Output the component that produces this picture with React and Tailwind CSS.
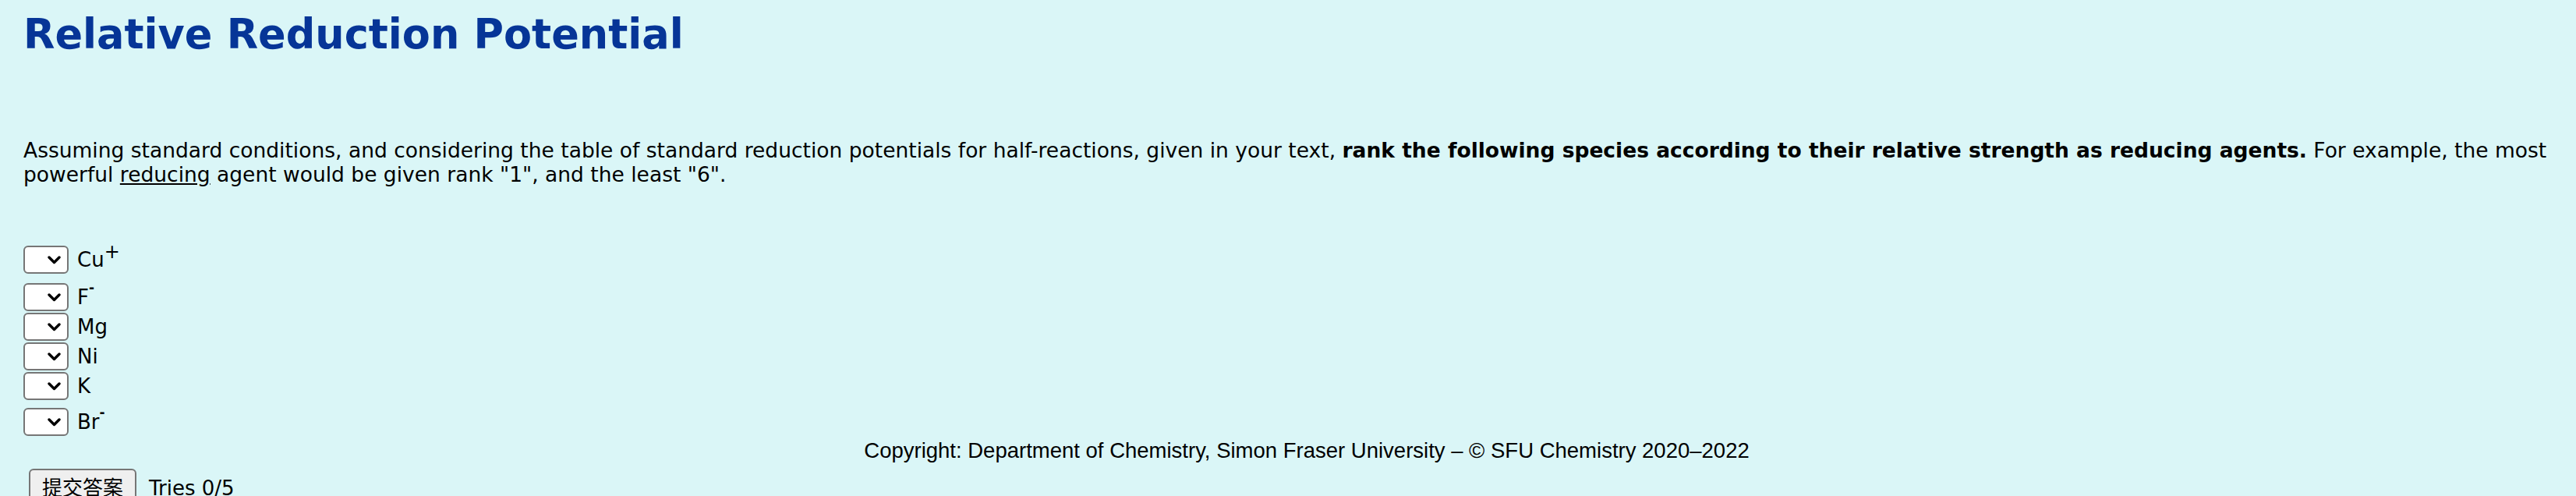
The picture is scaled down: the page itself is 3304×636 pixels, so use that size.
import React from "react";

const species = [
  { name: "Cu", sup: "+", mt: "mt-[76px]" },
  { name: "F", sup: "-", mt: "mt-[12px]" },
  { name: "Mg", sup: null, mt: "mt-[2px]" },
  { name: "Ni", sup: null, mt: "mt-[2px]" },
  { name: "K", sup: null, mt: "mt-[2px]" },
  { name: "Br", sup: "-", mt: "mt-[10px]" },
];

function RankSelect() {
  return (
    <div className="relative w-[58px] h-[36px]">
      <select className="appearance-none w-full h-full bg-white border-2 border-[#767676] rounded-[6px] outline-none">
        <option value=""></option>
        {[1, 2, 3, 4, 5, 6].map((n) => (
          <option key={n} value={n}>
            {n}
          </option>
        ))}
      </select>
      <svg
        className="absolute left-[31px] top-[13px] pointer-events-none"
        width="17"
        height="11"
        viewBox="0 0 17 11"
      >
        <path d="M2 2 L8.5 8.5 L15 2" fill="none" stroke="#000" strokeWidth="3.4" strokeLinecap="round" strokeLinejoin="round" />
      </svg>
    </div>
  );
}

export default function App() {
  return (
    <div className="min-h-[636px] bg-[#daf6f7] pl-[30px] pr-[10px] pt-[13px] text-black font-['DejaVu_Sans',Verdana,sans-serif]">
      <h1 className="text-[52.5px] leading-[62px] font-bold text-[#063597]">
        Relative Reduction Potential
      </h1>

      <p className="mt-[102px] text-[26.5px] leading-[31px] whitespace-nowrap">
        Assuming standard conditions, and considering the table of standard reduction potentials for half-reactions, given in your text,{" "}
        <b>rank the following species according to their relative strength as reducing agents.</b> For example, the most
        <br />
        powerful <u>reducing</u> agent would be given rank "1", and the least "6".
      </p>

      <div className="flex flex-col">
        {species.map((s) => (
          <div key={s.name} className={`flex items-center gap-[11px] ${s.mt}`}>
            <RankSelect />
            <span className="text-[26px] leading-[36px]">
              {s.name}
              {s.sup === "+" && <sup className="text-[24px] top-[-11px]">+</sup>}
              {s.sup === "-" && <sup className="text-[17px] font-bold top-[-15px]">-</sup>}
            </span>
          </div>
        ))}
      </div>

      <div className="mt-[4px] pl-[28px] text-center text-[27.5px] leading-[30px] font-['Liberation_Sans',Arial,sans-serif]">
        Copyright: Department of Chemistry, Simon Fraser University – © SFU Chemistry 2020–2022
      </div>

      <div className="mt-[8px] ml-[7px] flex items-start gap-[16px]">
        <button className="h-[46px] px-[15px] bg-[#efefef] border-2 border-[#767676] rounded-[6px] text-[26px] leading-[40px] font-['Noto_Sans_CJK_SC',sans-serif]">
          提交答案
        </button>
        <span className="text-[26px] leading-[46px] pt-[2px]">Tries 0/5</span>
      </div>
    </div>
  );
}
